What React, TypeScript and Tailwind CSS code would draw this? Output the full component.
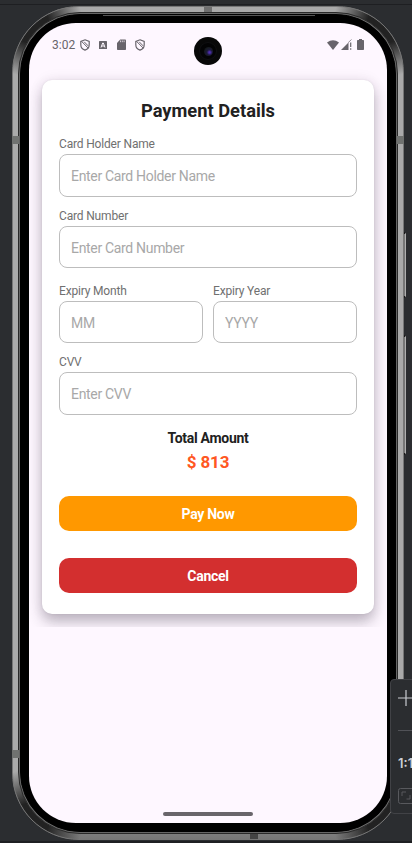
import React from "react";

function Shield() {
  return (
    <svg viewBox="0 0 10 12" className="h-3 w-[10px]" fill="none" stroke="#68646b" strokeWidth="1.2">
      <path d="M5 .8 9.2 2.4v3.3C9.2 8.3 7.4 10.3 5 11.1 2.600 10.300.8 8.300.8 5.700V2.400Z" />
      <path d="M1.500 2.300 8.300 9.200M4.200 2.800 8.200 6.900" strokeWidth="1" />
    </svg>
  );
}

function StatusBar() {
  return (
    <div className="flex h-[57px] shrink-0 items-start pt-[14px] pl-[23px] pr-[23px] text-[#68646b]">
      <span className="w-[24px] whitespace-nowrap text-[12px] leading-[16px]">3:02</span>
      <div className="ml-[4px] mt-[2px]"><Shield /></div>
      <svg viewBox="0 0 8 8" className="ml-[9px] mt-[4px] h-2 w-2">
        <rect width="8" height="8" rx=".6" fill="#68646b" />
        <path d="M2 6.500 3.700 2h.6L6 6.500M2.700 5h2.600" fill="none" stroke="#fef7ff" strokeWidth="1" />
      </svg>
      <svg viewBox="0 0 9 11" className="ml-[10px] mt-[2px] h-[11px] w-[9px]">
        <path d="M3.200.5H8.200Q9 .5 9 1.300V10.200Q9 11 8.200 11H.8Q0 11 0 10.200V4Z" fill="#68646b" />
        <path d="M3.500 1.500V3.200M5.300 1.500V3.200M7.100 1.500V3.200" stroke="#fef7ff" strokeWidth=".7" />
      </svg>
      <div className="ml-[9px] mt-[2px]"><Shield /></div>
      <svg viewBox="0 0 12 10" className="ml-auto mt-[3px] h-[10px] w-3">
        <path d="M0 2.500Q6-2 12 2.500L6 10Z" fill="#68646b" />
      </svg>
      <svg viewBox="0 0 11 11" className="ml-[2px] mt-[2px] h-[11px] w-[11px]">
        <path d="M0 11 7.500 3.500V11Z" fill="#68646b" />
        <path d="M7.200 3.600 10.500.5" stroke="#68646b" strokeWidth=".7" />
        <path d="M9.700 3.500V8M9.700 9.300V10.800" stroke="#68646b" strokeWidth="1.200" />
      </svg>
      <svg viewBox="0 0 7 11" className="ml-[5px] mt-[2px] h-[11px] w-[7px]">
        <path d="M2 0H5V1H6.200Q7 1 7 1.800V10.200Q7 11 6.200 11H.8Q0 11 0 10.200V1.800Q0 1 .8 1H2Z" fill="#68646b" />
      </svg>
    </div>
  );
}

interface FieldProps {
  label: string;
  placeholder: string;
  labelHeight?: string;
  inputHeight?: string;
}

function Field({ label, placeholder, labelHeight = "h-[18px] pt-px", inputHeight = "h-[42px] pt-px" }: FieldProps) {
  return (
    <label className="flex min-w-0 flex-1 flex-col">
      <span className={"whitespace-nowrap text-[12px] leading-[14px] tracking-[-0.17px] text-[#707070] " + labelHeight}>{label}</span>
      <input
        placeholder={placeholder}
        className={"w-full rounded-[8px] border border-[#bdbdbd] bg-white px-[11px] text-[14px] tracking-[-0.32px] text-[#222] outline-none placeholder:text-[#a8a8a8] " + inputHeight}
      />
    </label>
  );
}

function PaymentCard() {
  return (
    <div className="h-[547px] px-[13px] [clip-path:inset(-20px_0_0_0)]">
      <main className="flex h-[534px] flex-col rounded-[10px] bg-white px-[17px] pt-[20px] shadow-[0_8px_14px_rgba(50,40,60,0.30),0_0_14px_rgba(60,40,70,0.08),0_0_2px_rgba(50,40,60,0.10)]">
        <h1 className="h-[37px] text-center text-[18.3px] font-bold leading-[22px] text-[#212121]">Payment Details</h1>
        <div className="flex h-[71px]"><Field label="Card Holder Name" placeholder="Enter Card Holder Name" labelHeight="h-[17px]" inputHeight="h-[43px]" /></div>
        <div className="flex h-[75px]"><Field label="Card Number" placeholder="Enter Card Number" /></div>
        <div className="flex h-[71px] gap-[10px]">
          <Field label="Expiry Month" placeholder="MM" />
          <Field label="Expiry Year" placeholder="YYYY" />
        </div>
        <div className="flex h-[76px]"><Field label="CVV" placeholder="Enter CVV" inputHeight="h-[43px]" /></div>
        <p className="h-[22px] text-center text-[14px] font-bold leading-[16px] tracking-[-0.28px] text-[#212121]">Total Amount</p>
        <p className="h-[44px] text-center text-[17px] font-bold leading-[21px] tracking-[-0.1px] text-[#ff5722]">$ 813</p>
        <button className="h-[35px] shrink-0 rounded-[10px] bg-[#ff9800] pt-[2px] text-[14px] font-bold tracking-[-0.28px] text-white">Pay Now</button>
        <button className="mt-[27px] h-[35px] shrink-0 rounded-[10px] bg-[#d32f2f] pt-[2px] text-[14px] font-bold tracking-[-0.28px] text-white">Cancel</button>
      </main>
    </div>
  );
}

function SideButton({ className }: { className: string }) {
  return <div className={"absolute left-[402px] w-[4px] rounded-r-[2px] border-y-2 border-r border-y-[#171717] border-r-[#b0b0b0] bg-[#777] " + className} />;
}

function ZoomPanel() {
  return (
    <aside className="absolute left-[390px] top-[679px] flex h-[135px] w-[40px] flex-col rounded-[4px] border border-[#414246] bg-[#2b2d30] pl-[7px]">
      <svg viewBox="0 0 16 16" className="mt-[10px] h-4 w-4" stroke="#c9cbd0" strokeWidth="1.200"><path d="M0 8H16M8 0V16" /></svg>
      <div className="mt-[24px] h-px w-6 bg-[#515257]" />
      <span className="mt-[24px] font-['Inter',sans-serif] text-[13px] font-semibold leading-[16px] text-[#ced0d6]">1:1</span>
      <svg viewBox="0 0 20 16" className="mt-[17px] h-4 w-5 shrink-0" fill="none" stroke="#58595d">
        <rect x=".5" y=".5" width="19" height="15" rx="2" />
        <path d="M4 8V4H8M12 11H8.500M12 7V11" />
      </svg>
    </aside>
  );
}

export default function App() {
  return (
    <div className="relative h-[843px] w-[412px] overflow-hidden border-t-4 border-[#2b2d30] bg-[#2b2d30] font-['Roboto',sans-serif]">
      <div className="h-px bg-[#1e1f22]" />
      <div className="absolute inset-x-0 bottom-0 h-[2px] bg-[#1e1f22]" />
      <div className="absolute inset-x-0 -top-1 h-[843px]">
        <SideButton className="top-[232px] h-[66px]" />
        <SideButton className="top-[335px] h-[120px]" />
      </div>
      <div className="relative ml-3 mt-px h-[834px] w-[392px] rounded-[67px] border border-[#777] bg-[radial-gradient(circle_at_18px_18px,#222_18px,transparent_52px),radial-gradient(circle_at_372px_18px,#222_18px,transparent_52px),radial-gradient(circle_at_18px_814px,#222_18px,transparent_52px),radial-gradient(circle_at_372px_814px,#222_18px,transparent_52px),linear-gradient(#aaa,#aaa_95%,#777)] p-[5px]">
        <div className="h-full rounded-[62px] border border-[#292929] bg-[#666] p-px">
          <div className="h-full rounded-[60px] border border-black bg-black px-[8px] pb-[8px] pt-[8px]">
            <div className="relative flex h-[800px] w-[358px] flex-col overflow-hidden rounded-[47px] bg-[#fef7ff]">
              <StatusBar />
              <PaymentCard />
              <div className="ml-[134px] mt-auto mb-[7px] h-[4px] w-[90px] rounded-full bg-[#69656b]" />
              <div className="absolute left-[165px] top-[14px] flex size-[28px] items-center justify-center rounded-full bg-[#080808]">
                <div className="flex size-[18px] items-center justify-center rounded-full border border-[#101012] bg-[#030304]">
                  <div className="size-[9px] rounded-full bg-[radial-gradient(circle_at_62%_60%,#5030b5_8%,#1b1838_35%,#171b22_60%,#08080e)]" />
                </div>
              </div>
            </div>
          </div>
        </div>
        <div className="absolute left-[90px] top-[8px] h-px w-[212px] bg-[#555]" />
        <div className="absolute left-[191px] top-0 h-[5px] w-2 bg-[#707070]" />
        <div className="absolute left-[237px] bottom-0 h-[5px] w-2 bg-[#444]" />
        <div className="absolute -left-px top-[129px] h-2 w-[7px] bg-[#707270]" />
        <div className="absolute -right-px top-[129px] h-2 w-[7px] bg-[#707270]" />
        <div className="absolute -left-px top-[743px] h-2 w-[7px] bg-[#707270]" />
      </div>
      <div className="absolute inset-x-0 -top-1 h-[843px]"><ZoomPanel /></div>
    </div>
  );
}
